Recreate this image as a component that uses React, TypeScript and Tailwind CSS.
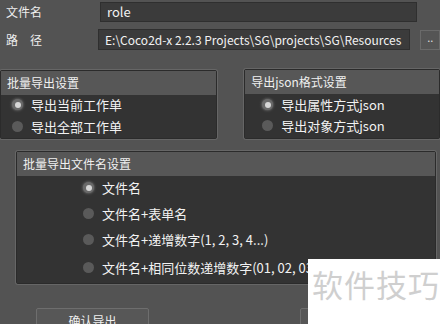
import React from "react"

const font = { fontFamily: '"Microsoft YaHei", "Noto Sans CJK SC", "Noto Sans", sans-serif' }

function Radio({ checked, label }: { checked?: boolean; label: string }) {
  return (
    <div className="flex items-center gap-[8px]">
      <span
        className={`w-[11px] h-[11px] rounded-full flex items-center justify-center ${
          checked ? "bg-[#6a6a6a] shadow-[0_0_3px_#888]" : "bg-[#5a5a5a]"
        }`}
      >
        {checked && <span className="w-[6px] h-[6px] rounded-full bg-[#d8d8d8]" />}
      </span>
      <span className="text-[13px] text-[#f2f2f2] leading-none">{label}</span>
    </div>
  )
}

function Panel({ title, className, bodyClass, children }: { title: string; className: string; bodyClass: string; children: React.ReactNode }) {
  return (
    <div className={`border border-[#2b2b2b] rounded-[2px] shadow-[0_0_0_1px_#666] flex flex-col ${className}`}>
      <div className="bg-[#575757] text-[12px] text-[#f0f0f0] leading-none flex items-center pl-[6px] h-[24px] shrink-0">{title}</div>
      <div className={`bg-[#333333] flex-1 ${bodyClass}`}>{children}</div>
    </div>
  )
}

export default function App() {
  return (
    <div className="w-[440px] h-[324px] bg-[#535353] relative overflow-hidden" style={font}>
      {/* file name */}
      <div className="flex items-center pt-[2px] pl-[6px]">
        <span className="w-[94px] text-[12px] text-[#eeeeee]">文件名</span>
        <div className="w-[317px] h-[20px] bg-[#3b3b3b] border border-[#2f2f2f] flex items-center pl-[6px] text-[13px] text-[#f2f2f2]">role</div>
      </div>
      {/* path */}
      <div className="flex items-center mt-[7px] pl-[6px]">
        <span className="w-[94px] text-[12px] text-[#eeeeee] flex gap-[12px]"><span>路</span><span>径</span></span>
        <div className="w-[319px] h-[21px] bg-[#3b3b3b] border border-[#2f2f2f] flex items-center pl-[6px] text-[12px] text-[#f2f2f2] whitespace-nowrap overflow-hidden">
          E:\Coco2d-x 2.2.3 Projects\SG\projects\SG\Resources
        </div>
        <div className="ml-[10px] w-[20px] h-[20px] border border-[#6a6a6a] bg-[#555] text-[#ddd] text-[11px] flex items-end justify-center pb-[3px]">..</div>
      </div>

      {/* export settings */}
      <div className="flex mt-[19px] items-start">
        <Panel title="批量导出设置" className="w-[222px] h-[69px] mt-[1px]" bodyClass="flex flex-col pl-[11px] pt-[3px] gap-[9px]">
          <Radio checked label="导出当前工作单" />
          <Radio label="导出全部工作单" />
        </Panel>
        <Panel title="导出json格式设置" className="ml-[27px] w-[200px] h-[70px]" bodyClass="flex flex-col pl-[17px] pt-[4px] gap-[8px]">
          <Radio checked label="导出属性方式json" />
          <Radio label="导出对象方式json" />
        </Panel>
      </div>

      {/* file name settings */}
      <div className="mt-[12px] pl-[16px]">
        <Panel title="批量导出文件名设置" className="w-[420px] h-[133px]" bodyClass="flex flex-col pl-[66px] pt-[5px] gap-[13px]">
          <Radio checked label="文件名" />
          <Radio label="文件名+表单名" />
          <Radio label="文件名+递增数字(1, 2, 3, 4...)" />
          <div className="mt-[2px]"><Radio label="文件名+相同位数递增数字(01, 02, 03...)" /></div>
        </Panel>
      </div>

      {/* buttons */}
      <div className="flex mt-[24px]">
        <div className="ml-[36px] w-[113px] h-[24px] border border-[#6e6e6e] rounded-[2px] bg-[#575757] text-[12px] text-[#f0f0f0] flex justify-center pt-[3px]">确认导出</div>
        <div className="ml-[151px] w-[113px] h-[24px] border border-[#6e6e6e] rounded-[2px] bg-[#575757]" />
      </div>

      {/* watermark */}
      <div className="absolute left-[308px] top-[259px] right-0 bottom-0 bg-white flex items-start pt-[9px] pl-[4px]">
        <span className="text-[31px] text-[#cfcfcf] leading-none tracking-[1px]">软件技巧</span>
      </div>
    </div>
  )
}
